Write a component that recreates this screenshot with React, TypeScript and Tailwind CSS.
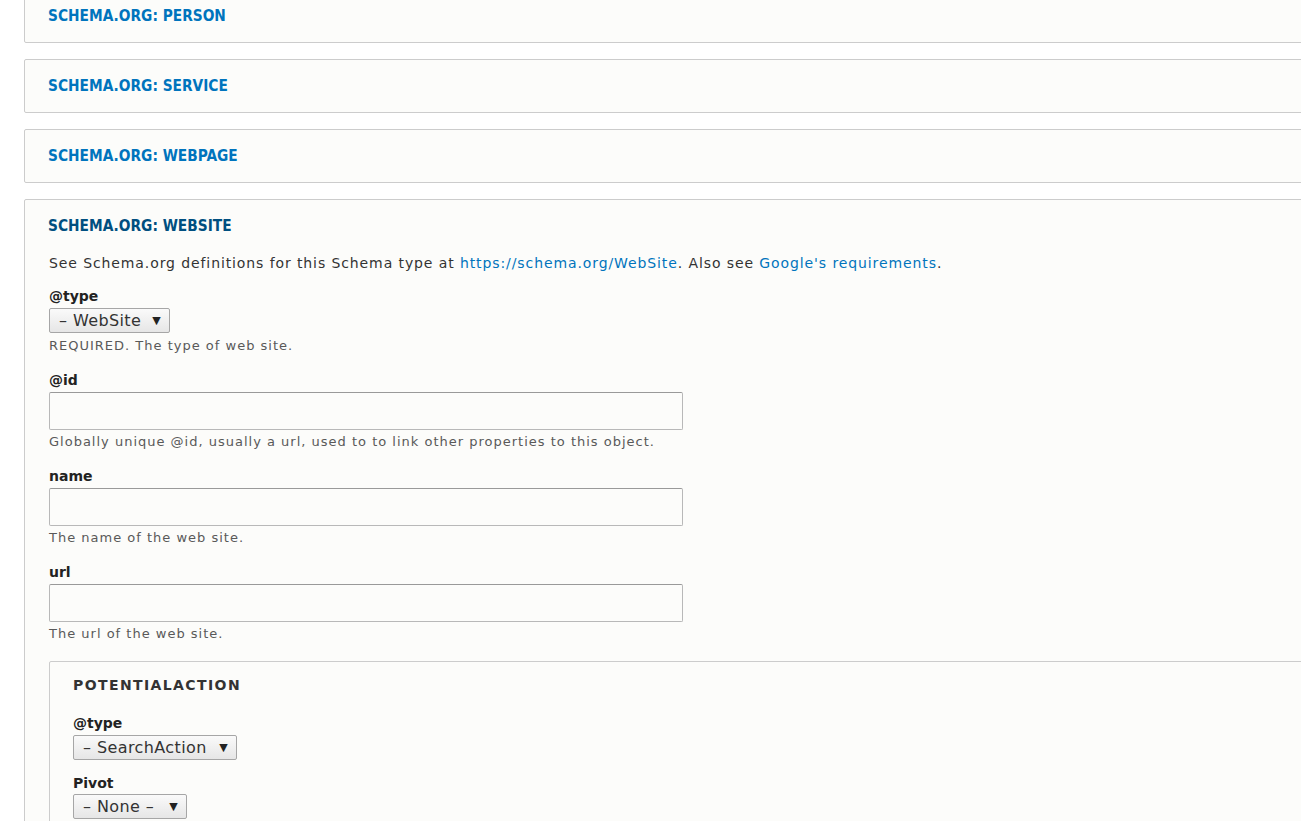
import React from "react";

const font = { fontFamily: '"DejaVu Sans", "Lucida Grande", Verdana, sans-serif' };
const headFont = { fontFamily: '"DejaVu Sans Condensed", "DejaVu Sans", sans-serif' };

function CollapsedPanel({ title }: { title: string }) {
  return (
    <div className="mr-[-40px] border border-[#ccc] rounded-[2px] bg-[#fcfcfa]">
      <div
        className="px-[23px] pt-[18px] pb-[18px] text-[15.3px] leading-4 font-bold uppercase text-[#0074bd]"
        style={headFont}
      >
        {title}
      </div>
    </div>
  );
}

function Select({ value, width }: { value: string; width: string }) {
  return (
    <div
      className={`${width} h-[25px] flex items-center justify-between pl-[9px] pr-[8px] border border-[#a6a6a6] rounded-[2px] bg-gradient-to-b from-[#fafafa] to-[#e6e6e6] text-[16px] leading-5 tracking-[0.4px] text-[#333]`}
    >
      <span>{value}</span>
      <span className="text-[11px] text-[#222]">▼</span>
    </div>
  );
}

function TextField({ label, help }: { label: string; help: string }) {
  return (
    <div className="mt-[15px]">
      <div className="text-[14px] leading-5 font-bold text-[#222]">{label}</div>
      <div className="mt-[2px] w-[634px] h-[38px] border border-[#b8b8b8] border-t-[#999] rounded-[2px] bg-[#fcfcfa]" />
      <div className="mt-[3px] text-[13px] leading-[18px] tracking-[1px] text-[#595959]">{help}</div>
    </div>
  );
}

export default function App() {
  return (
    <div className="min-h-screen bg-white overflow-hidden text-[#333]" style={font}>
      <div className="pl-[24px] mt-[-11px] flex flex-col gap-[16px]">
        <CollapsedPanel title="Schema.org: Person" />
        <CollapsedPanel title="Schema.org: Service" />
        <CollapsedPanel title="Schema.org: WebPage" />

        {/* open panel */}
        <div className="mr-[-40px] border border-[#ccc] rounded-[2px] bg-[#fcfcfa]">
          <div
            className="px-[23px] pt-[18px] pb-[18px] text-[15.3px] leading-4 font-bold uppercase text-[#004f80]"
            style={headFont}
          >
            Schema.org: WebSite
          </div>
          <div className="px-[24px] pb-[40px]">
            <p className="mt-[1px] text-[14px] leading-5 tracking-[0.9px]">
              See Schema.org definitions for this Schema type at{" "}
              <a className="text-[#0074bd]">https://schema.org/WebSite</a>. Also see{" "}
              <a className="text-[#0074bd]">Google's requirements</a>.
            </p>

            <div className="mt-[13px]">
              <div className="text-[14px] leading-5 font-bold text-[#222]">@type</div>
              <div className="mt-[2px]">
                <Select value="– WebSite" width="w-[121px]" />
              </div>
              <div className="mt-[4px] text-[13px] leading-[18px] tracking-[1px] text-[#595959]">
                REQUIRED. The type of web site.
              </div>
            </div>

            <TextField
              label="@id"
              help="Globally unique @id, usually a url, used to to link other properties to this object."
            />
            <TextField label="name" help="The name of the web site." />
            <TextField label="url" help="The url of the web site." />

            <div className="mt-[18px] mr-[-40px] border border-[#ccc] rounded-[2px] bg-[#fcfcfa] px-[23px] pb-[20px]">
              <div className="pt-[15px] text-[14px] leading-4 font-bold uppercase tracking-[0.1em] text-[#333]">
                PotentialAction
              </div>
              <div className="mt-[20px]">
                <div className="text-[14px] leading-5 font-bold text-[#222]">@type</div>
                <div className="mt-[2px]">
                  <Select value="– SearchAction" width="w-[164px]" />
                </div>
              </div>
              <div className="mt-[13px]">
                <div className="text-[14px] leading-5 font-bold text-[#222]">Pivot</div>
                <div className="mt-[1px]">
                  <Select value="– None –" width="w-[114px]" />
                </div>
              </div>
            </div>
          </div>
        </div>
      </div>
    </div>
  );
}
